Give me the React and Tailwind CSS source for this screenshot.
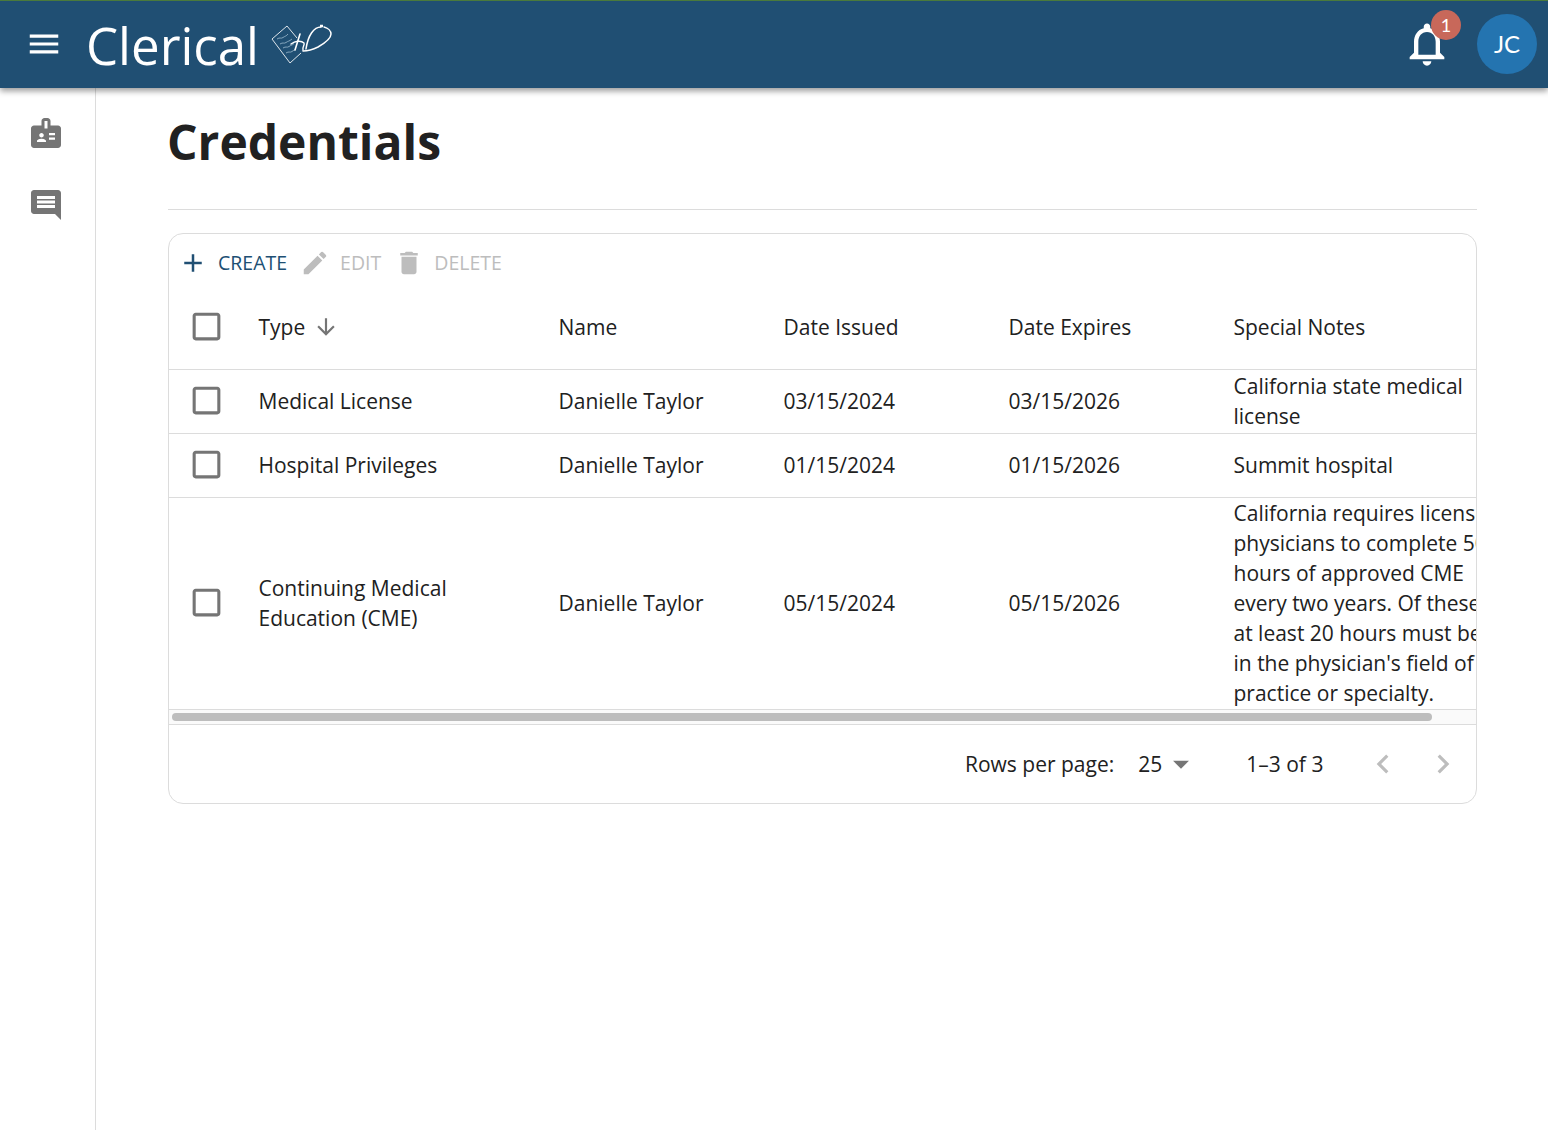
const P = ({ d, size = 24, className = "" }) => (
  <svg viewBox="0 0 24 24" width={size} height={size} fill="currentColor" className={"shrink-0 " + className}>
    <path d={d} />
  </svg>
);

const I = {
  menu: "M3 18h18v-2H3zm0-5h18v-2H3zm0-7v2h18V6z",
  badge: "M20 7h-5V4c0-1.1-.9-2-2-2h-2c-1.1 0-2 .9-2 2v3H4c-1.1 0-2 .9-2 2v11c0 1.1.9 2 2 2h16c1.1 0 2-.9 2-2V9c0-1.1-.9-2-2-2M9 12c.83 0 1.5.67 1.5 1.5S9.83 15 9 15s-1.5-.67-1.5-1.5S8.17 12 9 12m3 6H6v-.75c0-1 2-1.5 3-1.5s3 .5 3 1.5zm1-9h-2V4h2zm5 7.5h-4V15h4zm0-3h-4V12h4z",
  comment: "M21.99 4c0-1.1-.89-2-1.99-2H4c-1.1 0-2 .9-2 2v12c0 1.1.9 2 2 2h14l4 4zM18 14H6v-2h12zm0-3H6V9h12zm0-3H6V6h12z",
  bell: "M12 22c1.1 0 2-.9 2-2h-4c0 1.1.9 2 2 2m6-6v-5c0-3.07-1.63-5.64-4.5-6.32V4c0-.83-.67-1.5-1.5-1.5s-1.5.67-1.5 1.5v.68C7.64 5.36 6 7.92 6 11v5l-2 2v1h16v-1zm-2 1H8v-6c0-2.48 1.51-4.5 4-4.5s4 2.02 4 4.5z",
  add: "M19 13h-6v6h-2v-6H5v-2h6V5h2v6h6z",
  edit: "M3 17.25V21h3.75L17.81 9.94l-3.75-3.75zM20.71 7.04c.39-.39.39-1.02 0-1.41l-2.34-2.34a.9959.9959 0 0 0-1.41 0l-1.83 1.83 3.75 3.75z",
  del: "M6 19c0 1.1.9 2 2 2h8c1.1 0 2-.9 2-2V7H6zM19 4h-3.5l-1-1h-5l-1 1H5v2h14z",
  down: "m20 12-1.41-1.41L13 16.17V4h-2v12.17l-5.58-5.59L4 12l8 8z",
  drop: "m7 10 5 5 5-5z",
  left: "M15.41 16.59 10.83 12l4.58-4.59L14 6l-6 6 6 6z",
  right: "M8.59 16.59 13.17 12 8.59 7.41 10 6l6 6-6 6z",
  box: "M19 5v14H5V5zm0-2H5c-1.1 0-2 .9-2 2v14c0 1.1.9 2 2 2h14c1.1 0 2-.9 2-2V5c0-1.1-.9-2-2-2",
};

const Logo = () => (
  <svg viewBox="0 0 64 46" width="64" height="46" fill="none" stroke="#fff" className="shrink-0">
    <path d="M2 18 17 5 27 17M31 32 20 42 2 18" strokeWidth="1" opacity="0.85" />
    <g strokeWidth="0.8" stroke="#9fbccf">
      <path d="M7 18c3-2 4 0 6-1.500s3-1 5-3.500" />
      <path d="M10 23c3-2 4 0 6-1.500s3-1 6-3.500" />
      <path d="M13 27c3-2 4 0 6-1.500s3-1 5-3" />
      <path d="M16 32c3-2 4 0 6-1.500s2-1 3-2" />
    </g>
    <path d="M30 13 25 29" strokeWidth="1.600" strokeLinecap="round" />
    <path d="M21 23C25 20 31 19 34 22 35 24 32 26 33 29" strokeWidth="1.400" strokeLinecap="round" />
    <path d="M51 6C44 6 38 14 36 28" strokeWidth="1.500" strokeLinecap="round" />
    <path d="M54 6C58 7 61 10 61 13 61 17 55 22 48 26 44 28 39 30 33 30" strokeWidth="1.500" strokeLinecap="round" />
    <path d="M50 5 53 5" strokeWidth="2.500" />
  </svg>
);

const Check = () => (
  <div className="flex w-[74.5px] shrink-0 items-center justify-center pr-[0.5px]">
    <P d={I.box} size={37} className="text-[#757575]" />
  </div>
);

const COLS = ["w-[300px]", "w-[225px]", "w-[225px]", "w-[225px]", "w-[306px]"];

const Cell = ({ i, children }) => (
  <div className={`${COLS[i]} shrink-0 px-[15px]`}>
    {i === 4 ? <div className="w-[267px]">{children}</div> : children}
  </div>
);

const rows = [
  {
    h: "h-[64px]",
    c: [
      "Medical License",
      "Danielle Taylor",
      "03/15/2024",
      "03/15/2026",
      "California state medical license",
    ],
  },
  {
    h: "h-[64px]",
    c: ["Hospital Privileges", "Danielle Taylor", "01/15/2024", "01/15/2026", "Summit hospital"],
  },
  {
    h: "h-[212px]",
    c: [
      "Continuing Medical Education (CME)",
      "Danielle Taylor",
      "05/15/2024",
      "05/15/2026",
      "California requires licensed physicians to complete 50 hours of approved CME every two years. Of these, at least 20 hours must be in the physician's field of practice or specialty.",
    ],
  },
];

export default function App() {
  return (
    <div className="flex min-h-[1130px] flex-col bg-white font-['Open_Sans',sans-serif] text-[21px] leading-[30px] text-[#212121]">
      <header className="relative z-10 flex h-[88px] shrink-0 items-center border-t border-[#4a7a3c] bg-[#204f73] pb-[2px] pl-[25px] pr-[11px] text-white shadow-[0_3px_6px_rgba(0,0,0,0.4)]">
        <P d={I.menu} size={38} />
        <span className="ml-[23px] pt-[3px] text-[51px] font-normal leading-none">Clerical</span>
        <div className="ml-[11px]">
          <Logo />
        </div>
        <div className="ml-auto flex items-center">
          <div className="relative h-[52px] w-[52px]">
            <P d={I.bell} size={52} />
            <span className="absolute -right-[8px] -top-[8px] flex h-[30px] w-[30px] items-center justify-center rounded-full bg-[#c8685a] font-['Lato',sans-serif] text-[18px] font-normal">
              1
            </span>
          </div>
          <div className="ml-[24px] flex h-[60px] w-[60px] items-center justify-center rounded-full bg-[#2474b0] font-['Lato',sans-serif] text-[24px] font-normal">
            JC
          </div>
        </div>
      </header>

      <div className="flex flex-1">
        <aside className="flex w-[96px] shrink-0 flex-col items-center gap-[36px] border-r border-[#dcdcdc] pr-[3px] pt-[27px] text-[#757575]">
          <P d={I.badge} size={36} />
          <P d={I.comment} size={36} />
        </aside>

        <main className="ml-[72px] w-[1309px]">
          <h1 className="-ml-px mt-[21px] text-[48px] font-bold leading-[66px]">Credentials</h1>
          <div className="mt-[34px] h-px bg-[#dcdcdc]" />

          <section className="mt-[23px] overflow-hidden rounded-[15px] border border-[#dcdcdc]">
            <div className="flex h-[57px] items-center pl-[9px] text-[19.5px]">
              <div className="flex items-center text-[#204f73]">
                <P d={I.add} size={30} />
                <span className="ml-[10px]">CREATE</span>
              </div>
              <div className="ml-[13px] flex items-center text-[#bdbdbd]">
                <P d={I.edit} size={30} />
                <span className="ml-[10px]">EDIT</span>
              </div>
              <div className="ml-[13px] flex items-center text-[#bdbdbd]">
                <P d={I.del} size={30} />
                <span className="ml-[10px]">DELETE</span>
              </div>
            </div>

            <div className="overflow-hidden">
              <div className="w-[1356px]">
                <div className="flex h-[79px] items-center border-b border-[#dcdcdc] pb-[7px]">
                  <Check />
                  <Cell i={0}>
                    <span className="flex items-center gap-[8px]">
                      Type
                      <P d={I.down} size={26} className="text-[#757575]" />
                    </span>
                  </Cell>
                  <Cell i={1}>Name</Cell>
                  <Cell i={2}>Date Issued</Cell>
                  <Cell i={3}>Date Expires</Cell>
                  <Cell i={4}>Special Notes</Cell>
                </div>
                {rows.map((r, ri) => (
                  <div key={ri} className={`flex items-center border-b border-[#dcdcdc] pb-[2px] ${r.h}`}>
                    <Check />
                    {r.c.map((t, i) => (
                      <Cell key={i} i={i}>
                        {t}
                      </Cell>
                    ))}
                  </div>
                ))}
              </div>
            </div>

            <div className="flex h-[15px] items-center border-b border-[#dcdcdc] bg-[#fafafa] px-[3px]">
              <div className="h-[8px] w-[1260px] rounded-full bg-[#bdbdbd]" />
            </div>

            <div className="flex h-[78px] items-center pl-[796px]">
              <span>Rows per page:</span>
              <span className="ml-[24px]">25</span>
              <P d={I.drop} size={38} className="text-[#757575]" />
              <span className="ml-[46px]">1–3 of 3</span>
              <P d={I.left} size={38} className="ml-[41px] text-[#bdbdbd]" />
              <P d={I.right} size={38} className="ml-[22px] text-[#bdbdbd]" />
            </div>
          </section>
        </main>
      </div>
    </div>
  );
}
